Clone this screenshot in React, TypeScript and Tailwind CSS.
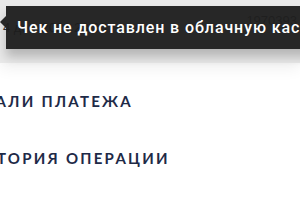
export default function App() {
  return (
    <div className="relative h-[200px] w-[300px] overflow-hidden bg-white font-['Lato','Liberation_Sans',sans-serif]">
      <div className="relative h-[63px] bg-[#e9e9e9] shadow-[0_6px_14px_rgba(0,0,0,0.06)]">
        <div className="flex items-center justify-between px-[3px] pt-[6px] font-['Liberation_Sans',sans-serif] text-[13px] text-[#333]">
          <span className="mt-[12px]">4 дек. 2021 23:30</span>
          <span className="-mt-[2px] text-[#555]">1970393</span>
        </div>

        <div className="absolute left-[6px] right-[-60px] top-[6px] flex h-[43px] items-center bg-[#1c1c1c]/95 pl-[11px] shadow-[0_8px_10px_rgba(0,0,0,0.22)]">
          <span className="whitespace-nowrap font-['Roboto','Liberation_Sans',sans-serif] text-[16px] font-medium tracking-[0.9px] text-white">
            Чек не доставлен в облачную кассу
          </span>
        </div>
        <div className="absolute left-0 top-[16px] h-0 w-0 border-y-[6px] border-r-[6px] border-y-transparent border-r-[#1c1c1c]/95" />
      </div>

      <div className="flex flex-col gap-[37px] pt-[28px]">
        <h2 className="-ml-[40px] whitespace-nowrap text-[15px] font-bold uppercase leading-5 tracking-[0.15em] text-[#1e2a47]">
          Детали платежа
        </h2>
        <h2 className="-ml-[29px] whitespace-nowrap text-[15px] font-bold uppercase leading-5 tracking-[0.15em] text-[#1e2a47]">
          История операции
        </h2>
      </div>
    </div>
  );
}
